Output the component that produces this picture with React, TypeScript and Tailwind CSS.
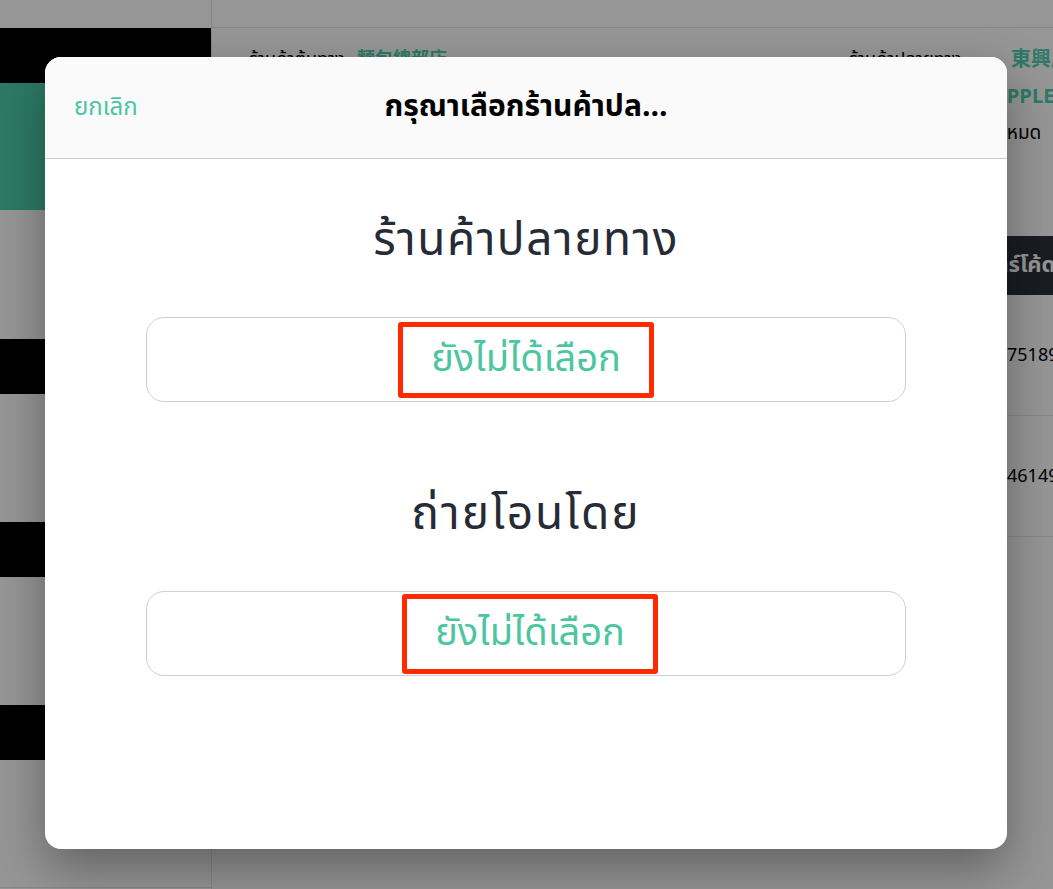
import { useState } from "react"

const FONT = { fontFamily: '"Noto Sans Thai", "Noto Sans", "Noto Sans CJK TC", sans-serif' }

const SIDEBAR_ROWS = [
	{ tone: "bg-black", h: "h-[55px]" },
	{ tone: "bg-[#4dcfae]", h: "h-[127px]" },
	{ tone: "bg-white", h: "h-[129px]" },
	{ tone: "bg-black", h: "h-[55px]" },
	{ tone: "bg-white", h: "h-[128px]" },
	{ tone: "bg-black", h: "h-[55px]" },
	{ tone: "bg-white", h: "h-[128px]" },
	{ tone: "bg-black", h: "h-[55px]" },
	{ tone: "bg-white", h: "h-[127px]" },
]

function Sidebar() {
	return (
		<aside className="flex w-[212px] shrink-0 flex-col border-r border-gray-200 bg-white">
			<div className="h-[28px] shrink-0" />
			{SIDEBAR_ROWS.map((row, i) => (
				<div key={i} className={`${row.h} shrink-0 ${row.tone}`} />
			))}
			<div className="border-t border-gray-200" />
		</aside>
	)
}

function TransferPage() {
	return (
		<main className="flex min-w-0 flex-1 flex-col bg-white">
			<div className="h-[28px] shrink-0 border-b border-gray-200" />

			{/* Store summary */}
			<div className="flex h-[208px] shrink-0 pl-[37px] pt-[20px] text-[18px] leading-[24px] whitespace-nowrap">
				<div className="flex w-[600px] shrink-0 gap-3">
					<span className="text-black">ร้านค้าต้นทาง</span>
					<span className="font-bold text-[#4dcfae]">麵包總部店</span>
				</div>
				<div className="flex shrink-0 flex-col items-start gap-[13px]">
					<div className="flex">
						<span className="w-[162px] text-black">ร้านค้าปลายทาง</span>
						<span className="text-[20px] font-bold text-[#4dcfae]">東興店</span>
					</div>
					<span className="pl-[144px] text-[20px] font-bold text-[#4dcfae]">APPLE STORE</span>
					<span className="pl-[136px] text-[19px] text-black">ทั้งหมด</span>
				</div>
			</div>

			{/* Barcode list */}
			<div className="flex h-[59px] shrink-0 items-center bg-[#2c313c] pl-[773px] text-[22px] font-bold whitespace-nowrap text-white">
				บาร์โค้ดสินค้า
			</div>
			<div className="flex h-[121px] shrink-0 items-center border-b border-gray-200 pl-[795px] text-[18px] text-black">
				7518900123
			</div>
			<div className="flex h-[121px] shrink-0 items-center border-b border-gray-200 pl-[795px] text-[18px] text-black">
				4614900456
			</div>
		</main>
	)
}

function PickerButton({ label, boxClass }: { label: string; boxClass: string }) {
	return (
		<button className="mx-auto flex h-[85px] w-[760px] items-center justify-center rounded-[18px] border border-[#cfcfcf] bg-white">
			<span
				className={`rounded-[3px] border-[5px] border-[#ff2a00] px-[28px] text-[38px] leading-[54px] text-[#4cc6a0] ${boxClass}`}
			>
				{label}
			</span>
		</button>
	)
}

function StorePickerModal({ onCancel }: { onCancel: () => void }) {
	return (
		<div className="absolute left-[45px] top-[57px] flex h-[792px] w-[962px] flex-col overflow-hidden rounded-[16px] bg-white shadow-[0_20px_50px_rgba(0,0,0,0.35)]">
			<header className="relative flex h-[102px] shrink-0 items-center justify-center border-b border-[#cccccc] bg-[#fafafa]">
				<button onClick={onCancel} className="absolute left-[29px] text-[24px] text-[#4cc6a0]">
					ยกเลิก
				</button>
				<h2 className="text-[30px] font-bold text-black">กรุณาเลือกร้านค้าปล...</h2>
			</header>

			<div className="flex flex-col pt-[52px]">
				<h3 className="text-center text-[46px] leading-[60px] tracking-[1.5px] text-[#262b36]">ร้านค้าปลายทาง</h3>
				<div className="mt-[46px]">
					<PickerButton label="ยังไม่ได้เลือก" boxClass="py-[6px]" />
				</div>
				<h3 className="mt-[83px] text-center text-[46px] leading-[60px] tracking-[2px] text-[#262b36]">ถ่ายโอนโดย</h3>
				<div className="mt-[46px]">
					<PickerButton label="ยังไม่ได้เลือก" boxClass="ml-[8px] py-[8px]" />
				</div>
			</div>
		</div>
	)
}

export default function App() {
	const [open, setOpen] = useState(true)

	return (
		<div className="relative flex h-[889px] w-[1053px] overflow-hidden bg-white" style={FONT}>
			<Sidebar />
			<TransferPage />

			{open && (
				<>
					<div className="absolute inset-0 bg-black/[0.41]" />
					<StorePickerModal onCancel={() => setOpen(false)} />
				</>
			)}
		</div>
	)
}
